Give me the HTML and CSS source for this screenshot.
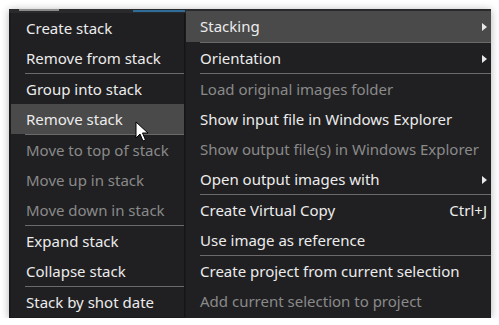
FILE: index.html
```html
<!DOCTYPE html>
<html lang="en">
<head>
    <meta charset="UTF-8">
    <title>Stacking menu</title>
    <link rel="stylesheet" href="styles.css">
</head>
<body>
    <div class="screen">
        <div class="app-strip">
            <span class="app-mark"></span>
            <span class="app-tab"></span>
        </div>
        <div class="menus">
            <ul class="menu submenu">
                <li class="item">Create stack</li>
                <li class="item">Remove from stack</li>
                <li class="sep"></li>
                <li class="item">Group into stack</li>
                <li class="item hover">Remove stack</li>
                <li class="sep"></li>
                <li class="item disabled">Move to top of stack</li>
                <li class="item disabled">Move up in stack</li>
                <li class="item disabled">Move down in stack</li>
                <li class="sep"></li>
                <li class="item">Expand stack</li>
                <li class="item">Collapse stack</li>
                <li class="sep"></li>
                <li class="item">Stack by shot date</li>
            </ul>
            <ul class="menu main">
                <li class="item hover has-sub">Stacking</li>
                <li class="sep"></li>
                <li class="item has-sub">Orientation</li>
                <li class="sep"></li>
                <li class="item disabled">Load original images folder</li>
                <li class="item">Show input file in Windows Explorer</li>
                <li class="item disabled">Show output file(s) in Windows Explorer</li>
                <li class="item has-sub">Open output images with</li>
                <li class="sep"></li>
                <li class="item">Create Virtual Copy <span class="shortcut">Ctrl+J</span></li>
                <li class="item">Use image as reference</li>
                <li class="sep"></li>
                <li class="item">Create project from current selection</li>
                <li class="item disabled">Add current selection to project</li>
            </ul>
        </div>
        <svg class="cursor" width="14" height="22" viewBox="0 0 14 22">
            <path d="M1 1 L1 17 L5 13 L8 20 L10.5 19 L7.5 12 L13 12 Z" fill="#fff" stroke="#000" stroke-width="1" stroke-linejoin="miter"/>
        </svg>
    </div>
</body>
</html>
```

FILE: styles.css
```css
body {
    margin: 0;
    background-color: #ffffff;
    font-family: "Noto Sans", "Open Sans", sans-serif;
}
.screen {
    position: relative;
    margin: 9px 0 0 9px;
    width: 482px;
    height: 309px;
    background-color: #1b1b1d;
    box-shadow: 0 1px 8px rgba(0, 0, 0, 0.3);
    overflow: hidden;
}
.app-strip {
    position: absolute;
    top: 0;
    left: 0;
    right: 0;
    height: 4px;
    background-color: #2a2a2c;
}
.app-mark {
    position: absolute;
    left: 10px;
    top: 0;
    width: 40px;
    height: 2px;
    background-color: #8c8c8c;
}
.app-tab {
    position: absolute;
    left: 124px;
    top: 1px;
    width: 52px;
    height: 2px;
    background-color: #2f6d98;
}
.menus {
    display: flex;
    align-items: flex-start;
}
.menu {
    list-style: none;
    margin: 0;
    padding: 0;
    background-color: #202022;
    font-size: 15px;
    color: #ececec;
}
.submenu {
    margin-top: 4px;
    margin-left: 2px;
    width: 173px;
    border-right: 1px solid #141415;
}
.main {
    margin-top: 2px;
    margin-left: 1px;
    flex: 1;
    padding-bottom: 3px;
}
.item {
    position: relative;
    height: 30px;
    line-height: 31px;
    padding-left: 15px;
    white-space: nowrap;
}
.main .item {
    padding-left: 14px;
    padding-right: 4px;
}
.main .item.hover {
    height: 31px;
}
.item.hover {
    background-color: #4a4a4a;
}
.item.disabled {
    color: #8a8a8a;
}
.has-sub::after {
    content: "";
    position: absolute;
    right: 4px;
    top: 12px;
    border-left: 5px solid #e8e8e8;
    border-top: 4px solid transparent;
    border-bottom: 4px solid transparent;
}
.shortcut {
    float: right;
}
.sep {
    height: 1px;
    margin-left: 14px;
    background-color: #6a6a6a;
}
.cursor {
    position: absolute;
    left: 126px;
    top: 112px;
}
```
